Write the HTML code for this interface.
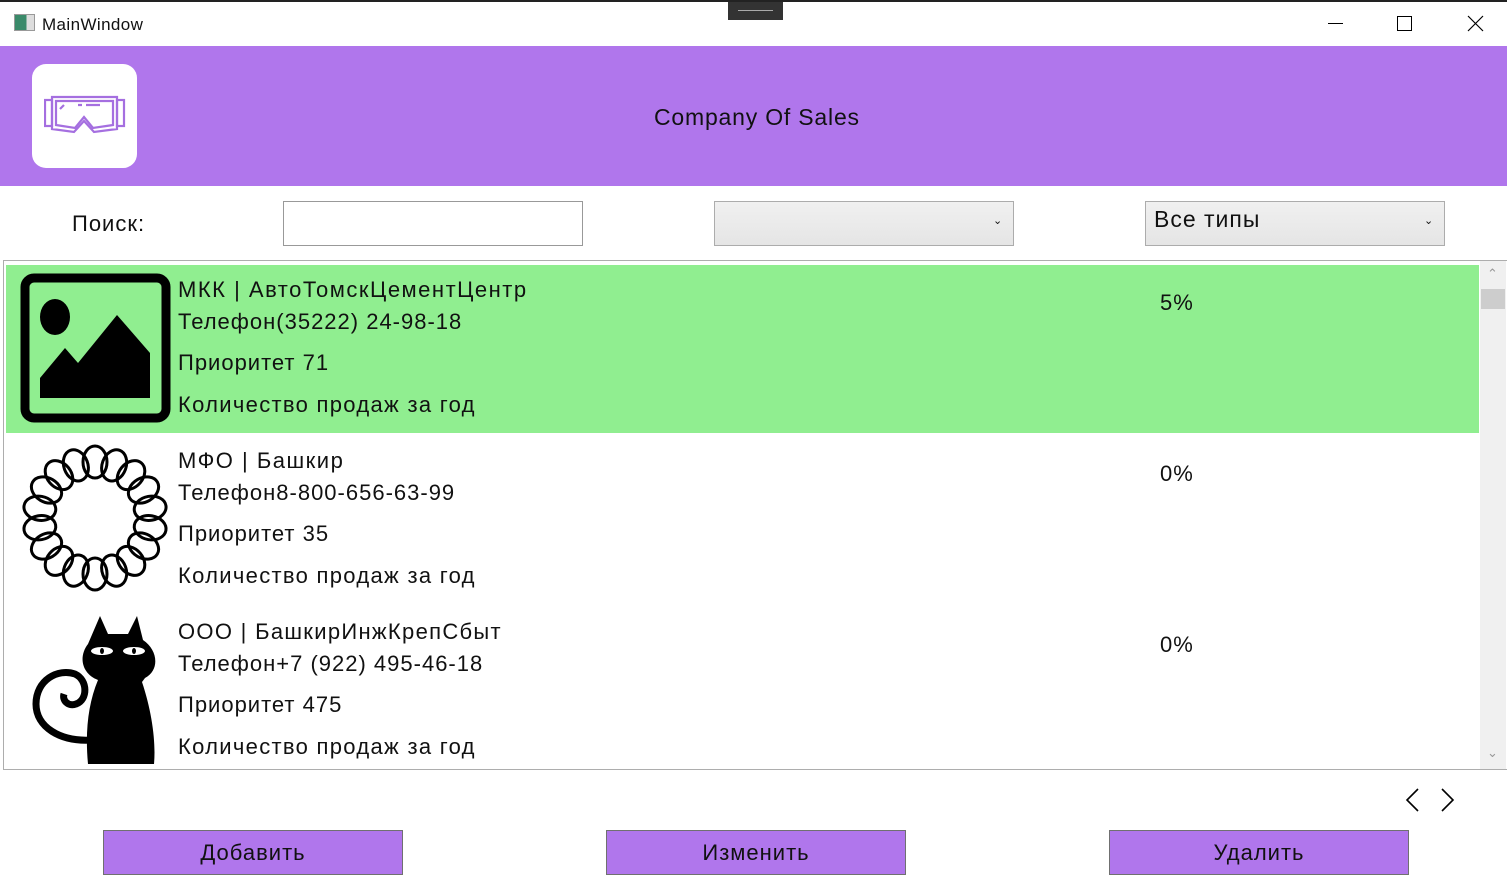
<!DOCTYPE html>
<html><head><meta charset="utf-8"><style>
*{margin:0;padding:0;box-sizing:border-box}
body{width:1507px;height:888px;overflow:hidden;background:#fff;font-family:"Liberation Sans",sans-serif;color:#111;position:relative}
.a{position:absolute}
.t{font-size:22px;white-space:nowrap;line-height:1;letter-spacing:1px}
.combo{border:1px solid #acacac;background:linear-gradient(#f0f0f0,#e5e5e5)}
.btn{background:#b076ec;border:1px solid #707070;font-size:22px;text-align:center;line-height:44px;height:45px;width:300px;top:830px;letter-spacing:1px}
</style></head><body>
<div class="a" style="left:0;top:0;width:1507px;height:2px;background:#222"></div>
<div class="a" style="left:728px;top:2px;width:55px;height:18px;background:#333"><div class="a" style="left:10px;top:8px;width:35px;height:1px;background:#aaa"></div></div>
<div class="a" style="left:14px;top:14px;width:21px;height:17px;border:1px solid #999;background:linear-gradient(90deg,#3a8a6a 60%,#ddd 60%)"></div>
<div class="a" style="left:42px;top:15px;font-size:17px;letter-spacing:0.4px">MainWindow</div>
<div class="a" style="left:1328px;top:23px;width:15px;height:1px;background:#000"></div>
<div class="a" style="left:1397px;top:16px;width:15px;height:15px;border:1px solid #000"></div>
<svg class="a" style="left:1467px;top:15px" width="17" height="17"><path d="M1 1L16 16M16 1L1 16" stroke="#000" stroke-width="1.2"/></svg>
<div class="a" style="left:0;top:46px;width:1507px;height:140px;background:#b076ec"></div>
<div class="a" style="left:32px;top:64px;width:105px;height:104px;background:#fff;border-radius:14px"></div>
<svg class="a" style="left:44px;top:94px" width="82" height="44" fill="none" stroke="#a56fe0" stroke-width="2.2">
<rect x="1" y="6" width="7" height="26"/><rect x="73" y="6" width="7" height="26"/>
<path d="M8 3H73V35L50 38L40 27L30 38L8 35Z"/><path d="M12 7H69V31L49 34L40 23L31 34L12 31Z"/>
<path d="M16 15L20 11M34 11H38M42 11H56"/></svg>
<div class="a t" style="left:654px;top:106px;font-size:23px;letter-spacing:0.8px">Company Of Sales</div>
<div class="a t" style="left:72px;top:213px">Поиск:</div>
<div class="a" style="left:283px;top:201px;width:300px;height:45px;border:1px solid #999;background:#fff"></div>
<div class="a combo" style="left:714px;top:201px;width:300px;height:45px"></div>
<div class="a" style="left:993px;top:214px;font-size:11px">&#8964;</div>
<div class="a combo" style="left:1145px;top:201px;width:300px;height:45px"></div>
<div class="a t" style="left:1154px;top:208px;font-size:23px">Все типы</div>
<div class="a" style="left:1424px;top:214px;font-size:11px">&#8964;</div>
<div class="a" style="left:3px;top:260px;width:1504px;height:510px;border:1px solid #adadad;border-right:none"></div>
<div class="a" style="left:1480px;top:261px;width:26px;height:508px;background:#f0f0f0"></div>
<div class="a" style="left:1481px;top:289px;width:24px;height:20px;background:#cdcdcd"></div>
<div class="a" style="left:1487px;top:266px;font-size:13px;color:#999">&#8963;</div>
<div class="a" style="left:1487px;top:745px;font-size:13px;color:#999">&#8964;</div>
<div class="a" style="left:6px;top:265px;width:1473px;height:168px;background:#90ee90"></div>
<svg class="a" style="left:20px;top:273px" width="151" height="150"><rect x="5" y="5" width="141" height="140" rx="9" fill="none" stroke="#000" stroke-width="9"/><ellipse cx="35" cy="44" rx="15" ry="18"/><path d="M20 105L45 75L58 90L97 42L130 80V125H20Z"/></svg>
<div class="a t" style="left:178px;top:279px;letter-spacing:1.5px">МКК | АвтоТомскЦементЦентр</div>
<div class="a t" style="left:178px;top:311px">Телефон(35222) 24-98-18</div>
<div class="a t" style="left:178px;top:352px">Приоритет 71</div>
<div class="a t" style="left:178px;top:394px;letter-spacing:1.3px">Количество продаж за год</div>
<div class="a t" style="left:1160px;top:292px">5%</div>
<svg class="a" style="left:20px;top:443px" width="150" height="150" fill="none" stroke="#000" stroke-width="3">
<g transform="translate(75,75)">
<ellipse cx="0" cy="-56" rx="12" ry="16"/><ellipse cx="0" cy="-56" rx="12" ry="16" transform="rotate(20)"/><ellipse cx="0" cy="-56" rx="12" ry="16" transform="rotate(40)"/><ellipse cx="0" cy="-56" rx="12" ry="16" transform="rotate(60)"/><ellipse cx="0" cy="-56" rx="12" ry="16" transform="rotate(80)"/><ellipse cx="0" cy="-56" rx="12" ry="16" transform="rotate(100)"/><ellipse cx="0" cy="-56" rx="12" ry="16" transform="rotate(120)"/><ellipse cx="0" cy="-56" rx="12" ry="16" transform="rotate(140)"/><ellipse cx="0" cy="-56" rx="12" ry="16" transform="rotate(160)"/><ellipse cx="0" cy="-56" rx="12" ry="16" transform="rotate(180)"/><ellipse cx="0" cy="-56" rx="12" ry="16" transform="rotate(200)"/><ellipse cx="0" cy="-56" rx="12" ry="16" transform="rotate(220)"/><ellipse cx="0" cy="-56" rx="12" ry="16" transform="rotate(240)"/><ellipse cx="0" cy="-56" rx="12" ry="16" transform="rotate(260)"/><ellipse cx="0" cy="-56" rx="12" ry="16" transform="rotate(280)"/><ellipse cx="0" cy="-56" rx="12" ry="16" transform="rotate(300)"/><ellipse cx="0" cy="-56" rx="12" ry="16" transform="rotate(320)"/><ellipse cx="0" cy="-56" rx="12" ry="16" transform="rotate(340)"/>
</g></svg>
<div class="a t" style="left:178px;top:450px;letter-spacing:1.5px">МФО | Башкир</div>
<div class="a t" style="left:178px;top:482px">Телефон8-800-656-63-99</div>
<div class="a t" style="left:178px;top:523px">Приоритет 35</div>
<div class="a t" style="left:178px;top:565px;letter-spacing:1.3px">Количество продаж за год</div>
<div class="a t" style="left:1160px;top:463px">0%</div>
<svg class="a" style="left:30px;top:612px" width="130" height="156">
<path d="M62 128C30 130 6 115 6 92C6 68 28 56 45 62C58 68 58 88 46 92C38 95 32 88 34 82" fill="none" stroke="#000" stroke-width="7"/>
<path d="M70 4L78 22H98L107 4L113 28C128 38 130 58 115 66L112 70C122 100 126 130 124 152H58C55 120 58 92 68 68C52 62 48 45 58 32Z"/>
<ellipse cx="72" cy="39" rx="11" ry="4" fill="#fff"/><ellipse cx="104" cy="39" rx="11" ry="4" fill="#fff"/>
<ellipse cx="72" cy="39" rx="2" ry="3"/><ellipse cx="104" cy="39" rx="2" ry="3"/></svg>
<div class="a t" style="left:178px;top:621px;letter-spacing:1.3px">ООО | БашкирИнжКрепСбыт</div>
<div class="a t" style="left:178px;top:653px">Телефон+7 (922) 495-46-18</div>
<div class="a t" style="left:178px;top:694px">Приоритет 475</div>
<div class="a t" style="left:178px;top:736px;letter-spacing:1.3px">Количество продаж за год</div>
<div class="a t" style="left:1160px;top:634px">0%</div>
<svg class="a" style="left:1405px;top:787px" width="50" height="26" fill="none" stroke="#000" stroke-width="1.6"><path d="M13 2L2 13L13 24M37 2L48 13L37 24"/></svg>
<div class="a btn" style="left:103px">Добавить</div>
<div class="a btn" style="left:606px">Изменить</div>
<div class="a btn" style="left:1109px">Удалить</div>
</body></html>
